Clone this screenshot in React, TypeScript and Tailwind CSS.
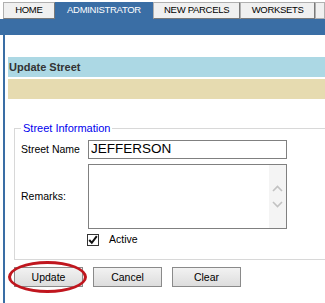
import React from 'react';

const tabs = [
  { name: 'HOME', w: 'w-[53px]' },
  { name: 'ADMINISTRATOR', w: 'w-[101px]' },
  { name: 'NEW PARCELS', w: 'w-[89px]' },
  { name: 'WORKSETS', w: 'w-[77px]' },
];

const btn =
  'w-[69px] h-[20px] bg-gradient-to-b from-[#f2f2f2] to-[#dddddd] border border-[#8a8a8a] text-[10.5px] leading-none';

const App: React.FC = () => {
  return (
    <div
      className="w-[325px] h-[303px] overflow-hidden bg-white text-[10.5px] text-black"
      style={{ fontFamily: '"Liberation Sans", Arial, sans-serif' }}
    >
      {/* Tabs */}
      <div className="flex h-[19px] pl-[3px] pt-[2px]">
        {tabs.map((t) =>
          t.name === 'ADMINISTRATOR' ? (
            <div
              key={t.name}
              className={`${t.w} h-[17px] bg-[#3a6ea5] text-white text-[9.5px] tracking-[-0.3px] flex items-center justify-center`}
            >
              {t.name}
            </div>
          ) : (
            <div
              key={t.name}
              className={`${t.w} h-[17px] bg-[#f0f0f0] border border-[#b0b0b0] border-r-[#7a7a7a] border-b-[#7a7a7a] text-[9.5px] tracking-[-0.3px] flex items-center justify-center`}
            >
              {t.name}
            </div>
          )
        )}
        <div className="w-[10px] h-[17px] bg-[#f0f0f0] border border-[#b0b0b0]" />
      </div>
      <div className="h-[16px] bg-[#3a6ea5]" />

      {/* Body */}
      <div className="ml-[3px] border-l-2 border-[#3a6ea5] h-[268px] pt-[22px] pl-[3px]">
        <div className="h-[20px] bg-[#acd8e4] flex items-center pl-[1px] font-bold text-[#333] text-[11px]">
          Update Street
        </div>
        <div className="h-[20px] bg-[#e6dbb0] mt-[2px]" />

        <fieldset className="ml-[6px] mt-[22px] border border-[#d8d8d8] border-r-0 pl-[6px] pb-[13px]">
          <legend className="text-[#0000ee] px-[2px] text-[11px] leading-[14px]">Street Information</legend>
          <div className="flex items-center mt-[5px]">
            <span className="w-[67px] shrink-0 whitespace-nowrap">Street Name</span>
            <input
              readOnly
              value="JEFFERSON"
              className="w-[199px] h-[19px] shrink-0 border border-[#808080] px-[2px] text-[13.5px] outline-none"
            />
          </div>
          <div className="flex items-center mt-[5px]">
            <span className="w-[67px] shrink-0">Remarks:</span>
            <div className="w-[199px] h-[65px] shrink-0 border border-[#808080] flex justify-end">
              <div className="w-[17px] h-full bg-[#f4f4f4] flex flex-col items-center justify-center gap-[9px]">
                <svg width="11" height="7" viewBox="0 0 11 7">
                  <path d="M1 6 L5.5 1.5 L10 6" fill="none" stroke="#c2c2c2" strokeWidth="1.6" />
                </svg>
                <svg width="11" height="7" viewBox="0 0 11 7">
                  <path d="M1 1 L5.5 5.5 L10 1" fill="none" stroke="#c2c2c2" strokeWidth="1.6" />
                </svg>
              </div>
            </div>
          </div>
          <div className="flex items-center mt-[5px] ml-[66px] h-[12px]">
            <div className="w-[12px] h-[12px] border border-[#333] bg-white flex items-center justify-center">
              <svg width="10" height="10" viewBox="0 0 10 10">
                <path d="M1.2 5 L3.8 7.8 L8.8 1.2" fill="none" stroke="#111" strokeWidth="2" />
              </svg>
            </div>
            <span className="ml-[10px]">Active</span>
          </div>
        </fieldset>

        <div className="flex gap-[10px] mt-[7px] ml-[6px]">
          <div className="relative">
            <button className={btn}>Update</button>
            <div className="absolute left-[-6px] top-[-6px] w-[79px] h-[32px] rounded-[50%] border-[3px] border-[#c0161e] pointer-events-none" />
          </div>
          <button className={btn}>Cancel</button>
          <button className={btn}>Clear</button>
        </div>
      </div>
    </div>
  );
};

export default App;
